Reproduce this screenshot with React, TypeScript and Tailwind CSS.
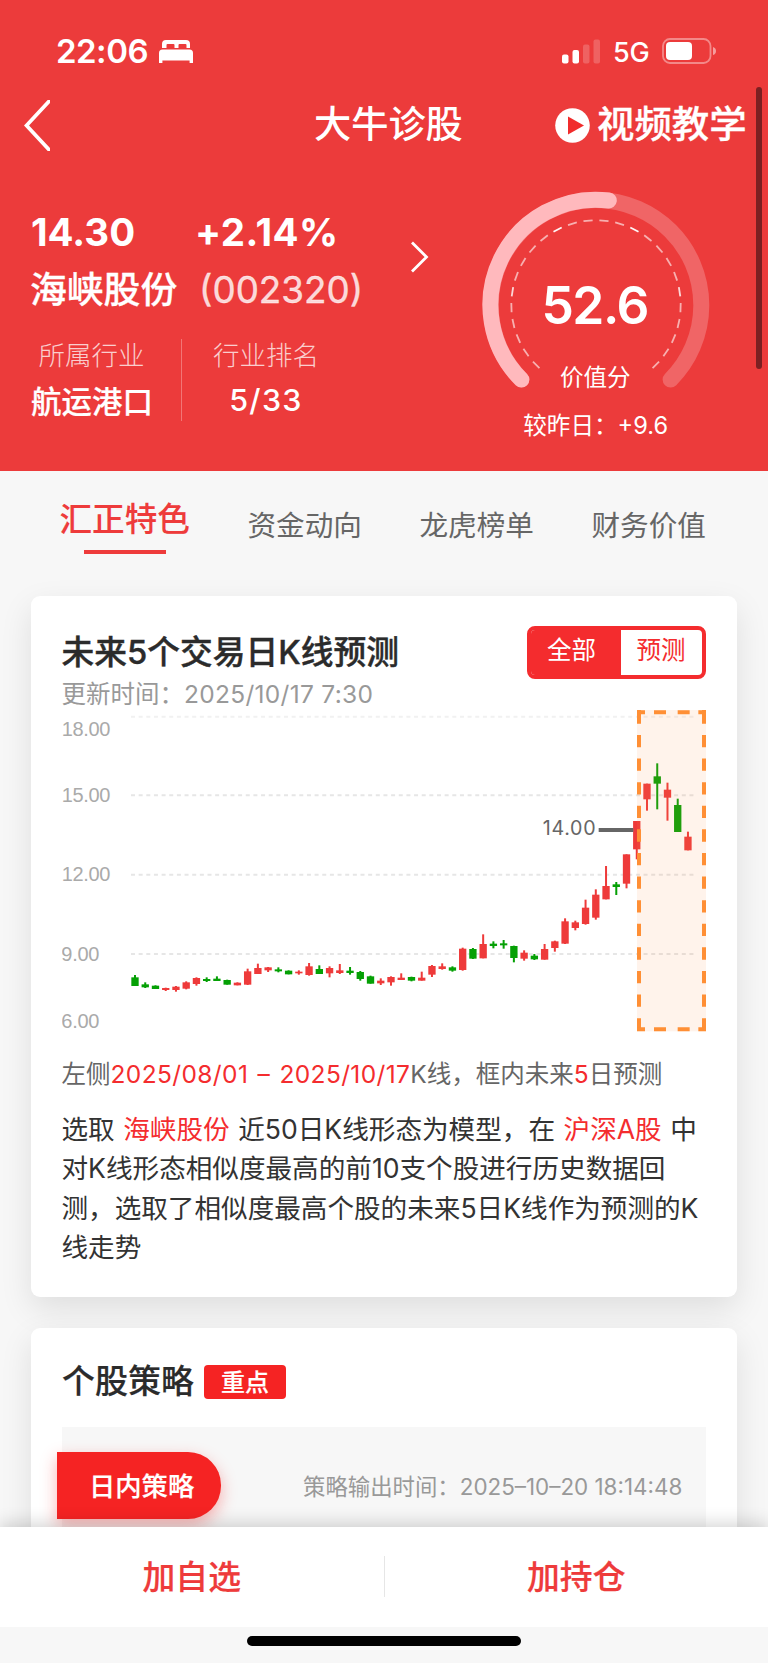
type Candle = [up: 0 | 1, high: number, top: number, bottom: number, low: number];

// Chart units are a third of a pixel; x advances by PITCH per trading day.
const FIRST = 285;
const PITCH = 30.72;

const history: Candle[] = [
  [0, 825, 832, 858, 858], [0, 847, 853, 862, 864], [0, 856, 857, 867, 867], [1, 863, 864, 870, 873],
  [1, 858, 860, 870, 875], [1, 844, 847, 866, 868], [1, 832, 834, 852, 857], [0, 832, 837, 843, 846],
  [0, 829, 836, 843, 843], [0, 839, 840, 854, 854], [1, 847, 848, 856, 856], [1, 806, 814, 854, 855],
  [1, 791, 804, 822, 822], [1, 801, 802, 811, 816], [0, 802, 808, 814, 817], [0, 811, 812, 823, 823],
  [1, 811, 815, 820, 824], [1, 789, 799, 825, 827], [0, 796, 807, 822, 822], [1, 799, 804, 820, 832],
  [1, 792, 811, 819, 822], [0, 801, 812, 819, 824], [0, 813, 816, 837, 842], [0, 827, 829, 851, 851],
  [1, 835, 842, 850, 855], [1, 829, 831, 847, 857], [1, 820, 833, 840, 840], [0, 830, 831, 842, 844],
  [1, 815, 833, 842, 842], [1, 795, 798, 824, 831], [1, 790, 799, 807, 809], [0, 799, 802, 812, 815],
  [1, 743, 746, 810, 812], [0, 744, 747, 776, 777], [1, 703, 732, 775, 775], [0, 724, 731, 738, 745],
  [0, 720, 730, 736, 746], [0, 737, 738, 774, 787], [1, 751, 758, 776, 782], [0, 762, 767, 778, 780],
  [1, 732, 747, 779, 779], [1, 722, 724, 744, 755], [1, 655, 664, 731, 732], [1, 662, 667, 684, 691],
  [1, 599, 623, 672, 674], [1, 568, 584, 653, 659], [1, 498, 558, 598, 598], [0, 546, 553, 561, 585],
  [1, 463, 463, 551, 565], [1, 363, 363, 448, 478],
];

const forecast: Candle[] = [
  [1, 251, 251, 298, 332], [0, 190, 229, 251, 328], [1, 248, 269, 293, 362],
  [0, 296, 315, 396, 396], [1, 395, 410, 451, 451],
];

function Candles({ data, start }: { data: Candle[]; start: number }) {
  return (
    <>
      {data.map(([up, high, top, bottom, low], i) => {
        const x = FIRST + PITCH * (start + i);
        return (
          <g key={i} fill={up ? "#ee3a3a" : "#05a005"}>
            <rect x={x - 3} y={high} width={6} height={low - high} />
            <rect x={x - 11} y={top} width={22} height={bottom - top} />
          </g>
        );
      })}
    </>
  );
}

function KLineChart() {
  return (
    <svg viewBox="66 24 1932 975" className="block h-[325px] w-[644px]" fontSize="60" fill="#aaa">
      {[50, 286, 524, 762].map((y) => (
        <line key={y} x1="273" x2="1962" y1={y} y2={y} stroke={y === 50 ? "#f1f1f1" : "#e6e6e6"} strokeWidth="6" strokeDasharray="12 10.95" />
      ))}
      <g className="font-['Liberation_Sans',sans-serif]">
        <text x="65" y="109" textLength="146">18.00</text>
        <text x="65" y="305" textLength="146">15.00</text>
        <text x="65" y="543" textLength="146">12.00</text>
        <text x="64" y="782" textLength="114">9.00</text>
        <text x="64" y="983" textLength="114">6.00</text>
      </g>
      <Candles data={history} start={0} />
      <Candles data={forecast} start={50} />
      <text x="1508" y="404" textLength="159" fill="#666" fontSize="59">14.00</text>
      <rect x="1676" y="384" width="104" height="12" fill="#666" />
      <rect x="1791" y="30" width="207" height="964" fill="#ff8f4a" fillOpacity="0.11" />
      <g stroke="#ff8f35" strokeWidth="12" fill="none">
        <path d="M1797 34V994M1992 34V994" strokeDasharray="37 33.8" />
        <path d="M1791 37H1815M1842 37H1878M1913 37H1949M1975 37H1998M1797 30V40M1992 30V40" />
        <path d="M1791 988H1815M1842 988H1878M1913 988H1949M1975 988H1998" />
      </g>
    </svg>
  );
}

function Gauge() {
  return (
    <svg viewBox="0 0 230 210" className="absolute top-[30px] left-0 h-[210px] w-[230px]" fill="none">
      <g strokeWidth="16" strokeLinecap="round">
        <path d="M40.4 189.6A105.3 105.3 0 1 1 189.6 189.6" stroke="#f06566" />
        <path d="M40.4 189.6A105.3 105.3 0 0 1 127.8 10.5" stroke="#ffb9bd" />
      </g>
      {Array.from({ length: 26 }, (_, i) => (
        <rect
          key={i}
          x="110.4"
          y="29.5"
          width="9.2"
          height="1.8"
          fill="#fff"
          fillOpacity={i === 10 || i === 15 ? 0.95 : i === 5 || i === 20 ? 0.8 : 0.6}
          transform={`rotate(${(i - 12.5) * 10.8} 115 115)`}
        />
      ))}
    </svg>
  );
}

function StatusBar() {
  return (
    <div className="flex h-[90px] items-end pr-[51px] pb-[26px] pl-14">
      <div className="flex h-[26px] flex-1 items-center">
        <span className="w-[92px] text-[33px] leading-[34px] font-semibold tracking-[-0.5px]">22:06</span>
        <svg viewBox="0 0 34 23" className="ml-[11px] h-[23px] w-[34px]" fill="currentColor">
          <path d="M3 8V4a4 4 0 0 1 4-4h20a4 4 0 0 1 4 4v4h-3.500V5a1 1 0 0 0-1-1h-6a1 1 0 0 0-1 1v3h-4V5a1 1 0 0 0-1-1h-6a1 1 0 0 0-1 1v3zM0 23V13a3.500 3.500 0 0 1 3.500-3.500h27A3.500 3.500 0 0 1 34 13v10h-3.400v-2.500H3.400V23z" />
        </svg>
      </div>
      <svg viewBox="0 0 39 25" className="h-[25px] w-[39px]" fill="currentColor">
        <rect x="0" y="15.500" width="6.500" height="9" rx="2" />
        <rect x="10.500" y="11" width="6.500" height="13.500" rx="2" />
        <rect x="21" y="5.500" width="6.500" height="19" rx="2" opacity=".2" />
        <rect x="31.500" y="0.500" width="6.500" height="24" rx="2" opacity=".2" />
      </svg>
      <span className="ml-[12px] w-[37px] text-[27px] leading-[22px] font-medium tracking-[-0.3px]">5G</span>
      <svg viewBox="0 0 55 26" className="ml-[12px] h-[26px] w-[55px]" fill="none">
        <rect x="1" y="1" width="47.500" height="24" rx="7" stroke="#fff" strokeOpacity=".4" strokeWidth="1.800" />
        <rect x="4" y="4" width="26" height="18" rx="4" fill="#fff" />
        <path d="M51 9v8q3-1 3-4t-3-4z" fill="#fff" fillOpacity=".5" />
      </svg>
    </div>
  );
}

export default function App() {
  return (
    <div className="relative flex h-[1663px] w-[768px] flex-col overflow-hidden bg-[#f7f7f7] font-['Inter','Noto_Sans_CJK_SC',sans-serif] text-[#333]">
      <header className="h-[471.400px] shrink-0 bg-[#ec3b3b] text-white">
        <StatusBar />
        <div className="flex h-[70px] items-center pl-6">
          <svg viewBox="0 0 26 51" className="h-[51px] w-[26px]" fill="none">
            <path d="M30-4L2.500 25.500 30 55" stroke="#fff" strokeWidth="3.800" />
          </svg>
          <h1 className="ml-[264px] w-[150px] text-[37.200px] leading-none font-medium whitespace-nowrap">大牛诊股</h1>
          <svg viewBox="0 0 35 35" className="ml-[91px] h-[35px] w-[35px]">
            <circle cx="17.500" cy="17.500" r="17.300" fill="#fff" />
            <path d="M13 8.500V26.500L29 17.500z" fill="#f12c2c" />
          </svg>
          <span className="ml-[7px] text-[37.400px] leading-none font-medium whitespace-nowrap [-webkit-text-stroke:0.3px]">视频教学</span>
        </div>
        <div className="flex">
          <section className="w-[380px] pt-[48px] pl-[31px]">
            <div className="flex h-[48px] items-center text-[38.500px] leading-none font-bold">
              <span className="w-[164px]">14.30</span>
              <span className="tracking-[0.5px]">+2.14%</span>
            </div>
            <div className="mt-[10px] flex h-[48px] items-center text-[36.800px] leading-none">
              <span className="-ml-px w-[169px] font-medium whitespace-nowrap [-webkit-text-stroke:0.3px]">海峡股份</span>
              <span className="text-white/80 [-webkit-text-stroke:0.3px]">(002320)</span>
            </div>
            <div className="mt-[25px] flex h-[82px] text-center">
              <div className="w-[121px]">
                <div className="mt-px h-[31px] text-[26.500px] leading-[31px] font-light text-white/75">所属行业</div>
                <div className="mt-[14px] h-[34px] text-[30.500px] leading-[34px] font-medium whitespace-nowrap [-webkit-text-stroke:0.2px]">航运港口</div>
              </div>
              <div className="ml-[29px] h-full w-px bg-white/30" />
              <div className="ml-[31px] w-[106px]">
                <div className="mt-px h-[31px] text-[26.500px] leading-[31px] font-light whitespace-nowrap text-white/75">行业排名</div>
                <div className="mt-[12px] h-[34px] text-[30.500px] leading-[34px] font-medium tracking-[1.3px]">5/33</div>
              </div>
            </div>
          </section>
          <svg viewBox="0 0 20 34" className="mt-[80px] ml-[30px] h-[34px] w-[20px]" fill="none">
            <path d="M2 2.500L16.500 17 2 31.500" stroke="#fff" strokeWidth="2.800" />
          </svg>
          <section className="relative ml-[50.700px] flex h-[290px] w-[230px] flex-col items-center pt-[30px]">
            <Gauge />
            <div className="mt-[88px] pr-[2px] text-[51.500px] leading-[54px] font-semibold tracking-[-1.500px]">52.6</div>
            <div className="mt-[32px] pr-px text-[23.500px] leading-[28px]">价值分</div>
            <div className="mt-[20px] text-[23.600px] leading-[28px] whitespace-nowrap">较昨日：+9.6</div>
          </section>
        </div>
      </header>

      <div className="absolute top-[87px] right-[6px] h-[282px] w-[6px] rounded-full bg-[#7c2022]" />

      <main className="min-h-0 flex-1 overflow-hidden px-[31px]">
        <nav className="flex h-[124.600px] text-[28.600px] text-[#666]">
          <div className="ml-[28.500px] w-[132.500px] pt-[26.500px] text-[#ee3b3b]">
            <div className="text-[32.600px] leading-[42px] font-medium whitespace-nowrap [-webkit-text-stroke:0.1px]">汇正特色</div>
            <div className="mt-[10px] ml-[24.500px] h-[4px] w-[82px] bg-[#ee3b3b]" />
          </div>
          <div className="ml-[55.500px] w-[172px] pt-[34.500px] leading-[40px]">资金动向</div>
          <div className="w-[172px] pt-[34.500px] leading-[40px]">龙虎榜单</div>
          <div className="pt-[34.500px] leading-[40px] whitespace-nowrap">财务价值</div>
        </nav>

        <section className="h-[701.200px] rounded-[9px] bg-white px-[31px] pt-[30px] shadow-[0_12px_32px_rgba(0,0,0,0.1)]">
          <div className="flex h-[53px] justify-between">
            <h2 className="-ml-[0.500px] text-[32.750px] leading-[52px] font-medium text-[#2b2b2b] [-webkit-text-stroke:0.4px]">未来5个交易日K线预测</h2>
            <div className="flex w-[179px] overflow-hidden rounded-[8px] border-4 border-[#f42c2e] text-[24.500px] leading-[40px]">
              <div className="w-[90px] bg-[#f42c2e] pr-[9px] text-center text-white">全部</div>
              <div className="flex-1 pr-[1px] text-center text-[#f42c2e]">预测</div>
            </div>
          </div>
          <div className="mt-px -ml-[0.500px] h-[28px] text-[24.500px] leading-[29px] text-[#999]">
            更新时间：<span className="tracking-[0.300px]">2025/10/17 7:30</span>
          </div>
          <KLineChart />
          <p className="mt-[24px] -ml-[0.500px] text-[24.500px] leading-[34px] whitespace-nowrap text-[#666]">
            左侧<span className="tracking-[0.380px] text-[#f42c2e] [word-spacing:2px]">2025/08/01 – 2025/10/17</span>K线，框内未来<span className="text-[#f42c2e]">5</span>日预测
          </p>
          <p className="mt-[19px] -ml-[0.500px] text-[26.600px] leading-[39.400px] whitespace-nowrap [word-spacing:1.100px]">
            选取 <span className="text-[#f42c2e]">海峡股份</span> 近50日K线形态为模型，在 <span className="text-[#f42c2e]">沪深A股</span> 中<br />
            对K线形态相似度最高的前10支个股进行历史数据回<br />
            测，选取了相似度最高个股的未来5日K线作为预测的K<br />
            线走势
          </p>
        </section>

        <section className="mt-[30.400px] h-[260px] rounded-[9px] bg-white px-[31px] pt-[37px] shadow-[0_12px_32px_rgba(0,0,0,0.1)]">
          <div className="flex h-[34px] items-center">
            <h2 className="w-[142px] text-[33px] leading-none font-medium whitespace-nowrap text-[#2b2b2b] [-webkit-text-stroke:0.2px]">个股策略</h2>
            <span className="h-[34px] w-[82px] rounded-[4px] bg-[#f52323] text-center text-[24px] leading-[35px] font-medium text-white [-webkit-text-stroke:0.2px]">重点</span>
          </div>
          <div className="mt-[28px] flex h-[160px] items-start bg-[#f7f7f7] pt-[25px]">
            <div className="-ml-[5px] h-[67px] w-[164px] rounded-r-[33px] bg-[#f52323] pl-[32px] text-[26.300px] leading-[69px] font-medium whitespace-nowrap text-white shadow-[0_6px_16px_rgba(245,35,35,0.35)] [-webkit-text-stroke:0.2px]">
              日内策略
            </div>
            <div className="ml-[82px] text-[22.400px] leading-[69px] whitespace-nowrap text-[#999]">策略输出时间：2025–10–20 18:14:48</div>
          </div>
        </section>
      </main>

      <footer className="relative h-[136.500px] shrink-0 shadow-[0_-4px_16px_rgba(0,0,0,0.16)]">
        <div className="flex h-[100.500px] items-center bg-white text-[32.800px] font-medium text-[#ee3b3b]">
          <div className="flex-1 pt-[2px] text-center [-webkit-text-stroke:0.2px]">加自选</div>
          <div className="h-[41px] w-px bg-[#e6e6e6]" />
          <div className="flex-1 pt-[2px] text-center [-webkit-text-stroke:0.2px]">加持仓</div>
        </div>
        <div className="flex h-[36px] justify-center bg-[#f7f7f7] pt-[9px]">
          <div className="h-[10px] w-[274px] rounded-full bg-black" />
        </div>
      </footer>
    </div>
  );
}
